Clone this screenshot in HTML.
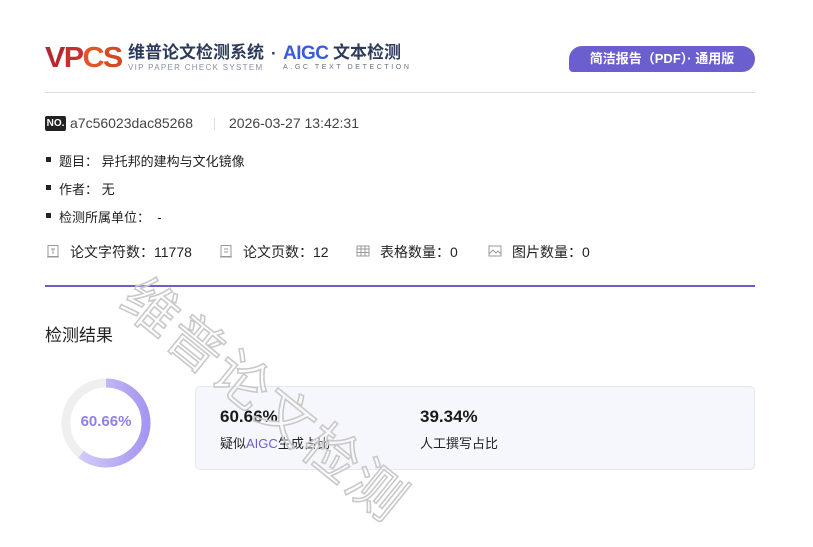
<!DOCTYPE html>
<html><head><meta charset="utf-8"><style>
*{margin:0;padding:0;box-sizing:border-box}
body{width:813px;height:547px;background:#fff;font-family:"Liberation Sans","Noto Sans CJK SC",sans-serif;color:#222;position:relative;overflow:hidden}
.a{position:absolute;white-space:nowrap}
.li{font-size:13px;color:#222}
.li:before{content:"";position:absolute;left:-13px;top:6px;width:5px;height:5px;background:#222}
</style></head><body>
<!-- logo -->
<div class="a" style="left:45px;top:42px;font-size:29px;font-weight:900;letter-spacing:-1.5px;line-height:32px;color:#b5282e;font-family:'Liberation Sans',sans-serif;transform:scaleX(1.05);transform-origin:left">V<span style="color:#c5312a">P</span><span style="color:#e0562a">C</span><span style="color:#d44a22">S</span></div>
<div class="a" style="left:128px;top:43px;font-size:17px;font-weight:bold;color:#2d3a5a;line-height:20px">维普论文检测系统</div>
<div class="a" style="left:128px;top:63px;font-size:8px;color:#8a90a0;letter-spacing:1.3px">VIP PAPER CHECK SYSTEM</div>
<div class="a" style="left:271px;top:44px;font-size:17px;font-weight:bold;color:#2d3a5a">·</div>
<div class="a" style="left:283px;top:43px;font-size:19px;font-weight:900;color:#3b5bdb;line-height:22px;letter-spacing:-0.5px">AIGC</div>
<div class="a" style="left:333px;top:43px;font-size:17px;font-weight:bold;color:#2d3a5a;line-height:20px">文本检测</div>
<div class="a" style="left:283px;top:64px;font-size:7px;color:#6a7080;letter-spacing:2.6px">A.GC TEXT DETECTION</div>
<div class="a" style="left:569px;top:46px;width:186px;height:26px;background:#6b5ecf;border-radius:13px 13px 13px 4px;color:#fff;font-size:13px;font-weight:bold;line-height:26px;text-align:center">简洁报告（PDF）· 通用版</div>
<div class="a" style="left:45px;top:92px;width:710px;height:1px;background:#ddd"></div>
<!-- id -->
<div class="a" style="left:45px;top:116px;width:21px;height:15px;background:#222;color:#fff;font-size:10px;font-weight:bold;line-height:15px;text-align:center;border-radius:2px">NO.</div>
<div class="a" style="left:70px;top:115px;font-size:14px;color:#444">a7c56023dac85268</div>
<div class="a" style="left:214px;top:118px;width:1px;height:12px;background:#ddd"></div>
<div class="a" style="left:229px;top:115px;font-size:14px;color:#444">2026-03-27 13:42:31</div>
<div class="a li" style="left:59px;top:151px">题目：&nbsp;异托邦的建构与文化镜像</div>
<div class="a li" style="left:59px;top:179px">作者：&nbsp;无</div>
<div class="a li" style="left:59px;top:207px">检测所属单位：&nbsp;&nbsp;-</div>
<!-- stats -->
<svg class="a" style="left:46px;top:244px" width="14" height="14" viewBox="0 0 14 14" fill="none" stroke="#999"><rect x="2" y="1.5" width="10" height="11"/><path d="M5 5h4M7 5v5M1 13h12"/></svg>
<div class="a" style="left:70px;top:242px;font-size:14px">论文字符数：11778</div>
<svg class="a" style="left:219px;top:244px" width="14" height="14" viewBox="0 0 14 14" fill="none" stroke="#999"><rect x="2" y="1.5" width="10" height="11"/><path d="M5 5h4M5 8h4M1 13h12"/></svg>
<div class="a" style="left:243px;top:242px;font-size:14px">论文页数：12</div>
<svg class="a" style="left:356px;top:245px" width="14" height="12" viewBox="0 0 14 12" fill="none" stroke="#999"><rect x="1" y="1" width="12" height="10"/><path d="M1 4h12M1 7.5h12M5 1v10M9 1v10"/></svg>
<div class="a" style="left:380px;top:242px;font-size:14px">表格数量：0</div>
<svg class="a" style="left:488px;top:245px" width="14" height="12" viewBox="0 0 14 12" fill="none" stroke="#999"><rect x="1" y="1" width="12" height="10"/><path d="M1 9l4-4 3 3 2-2 3 3"/></svg>
<div class="a" style="left:512px;top:242px;font-size:14px">图片数量：0</div>
<div class="a" style="left:45px;top:285px;width:710px;height:2px;background:#6b5ecf"></div>
<div class="a" style="left:45px;top:321px;font-size:17px;color:#222">检测结果</div>
<!-- ring -->
<svg class="a" style="left:60px;top:377px" width="92" height="92" viewBox="0 0 92 92">
<defs><linearGradient id="g" x1="0" y1="0" x2="0" y2="1"><stop offset="0" stop-color="#ddd6fb"/><stop offset="1" stop-color="#a796f0"/></linearGradient></defs>
<circle cx="46" cy="46" r="40" fill="none" stroke="#efefef" stroke-width="9"/>
<circle cx="46" cy="46" r="40" fill="none" stroke="url(#g)" stroke-width="9" stroke-dasharray="152.4 251.3" transform="rotate(-90 46 46)"/>
</svg>
<div class="a" style="left:60px;top:413px;width:92px;text-align:center;font-size:15px;font-weight:bold;color:#8f80e6">60.66%</div>
<!-- card -->
<div class="a" style="left:195px;top:386px;width:560px;height:84px;background:#f6f7fc;border:1px solid #e6e8f0;border-radius:5px"></div>
<div class="a" style="left:220px;top:407px;font-size:17px;font-weight:bold;color:#1a1a1a">60.66%</div>
<div class="a" style="left:220px;top:433px;font-size:13px">疑似<span style="color:#6b5ecf">AIGC</span>生成占比</div>
<div class="a" style="left:420px;top:407px;font-size:17px;font-weight:bold;color:#1a1a1a">39.34%</div>
<div class="a" style="left:420px;top:433px;font-size:13px">人工撰写占比</div>
<!-- watermark -->
<div class="a" style="left:268px;top:396px;transform:translate(-50%,-50%) rotate(39deg);font-size:55px;color:rgba(255,255,255,0.3);-webkit-text-stroke:1.6px #c9c9c9;letter-spacing:3px;font-family:'Noto Sans CJK SC',sans-serif">维普论文检测</div>
</body></html>
